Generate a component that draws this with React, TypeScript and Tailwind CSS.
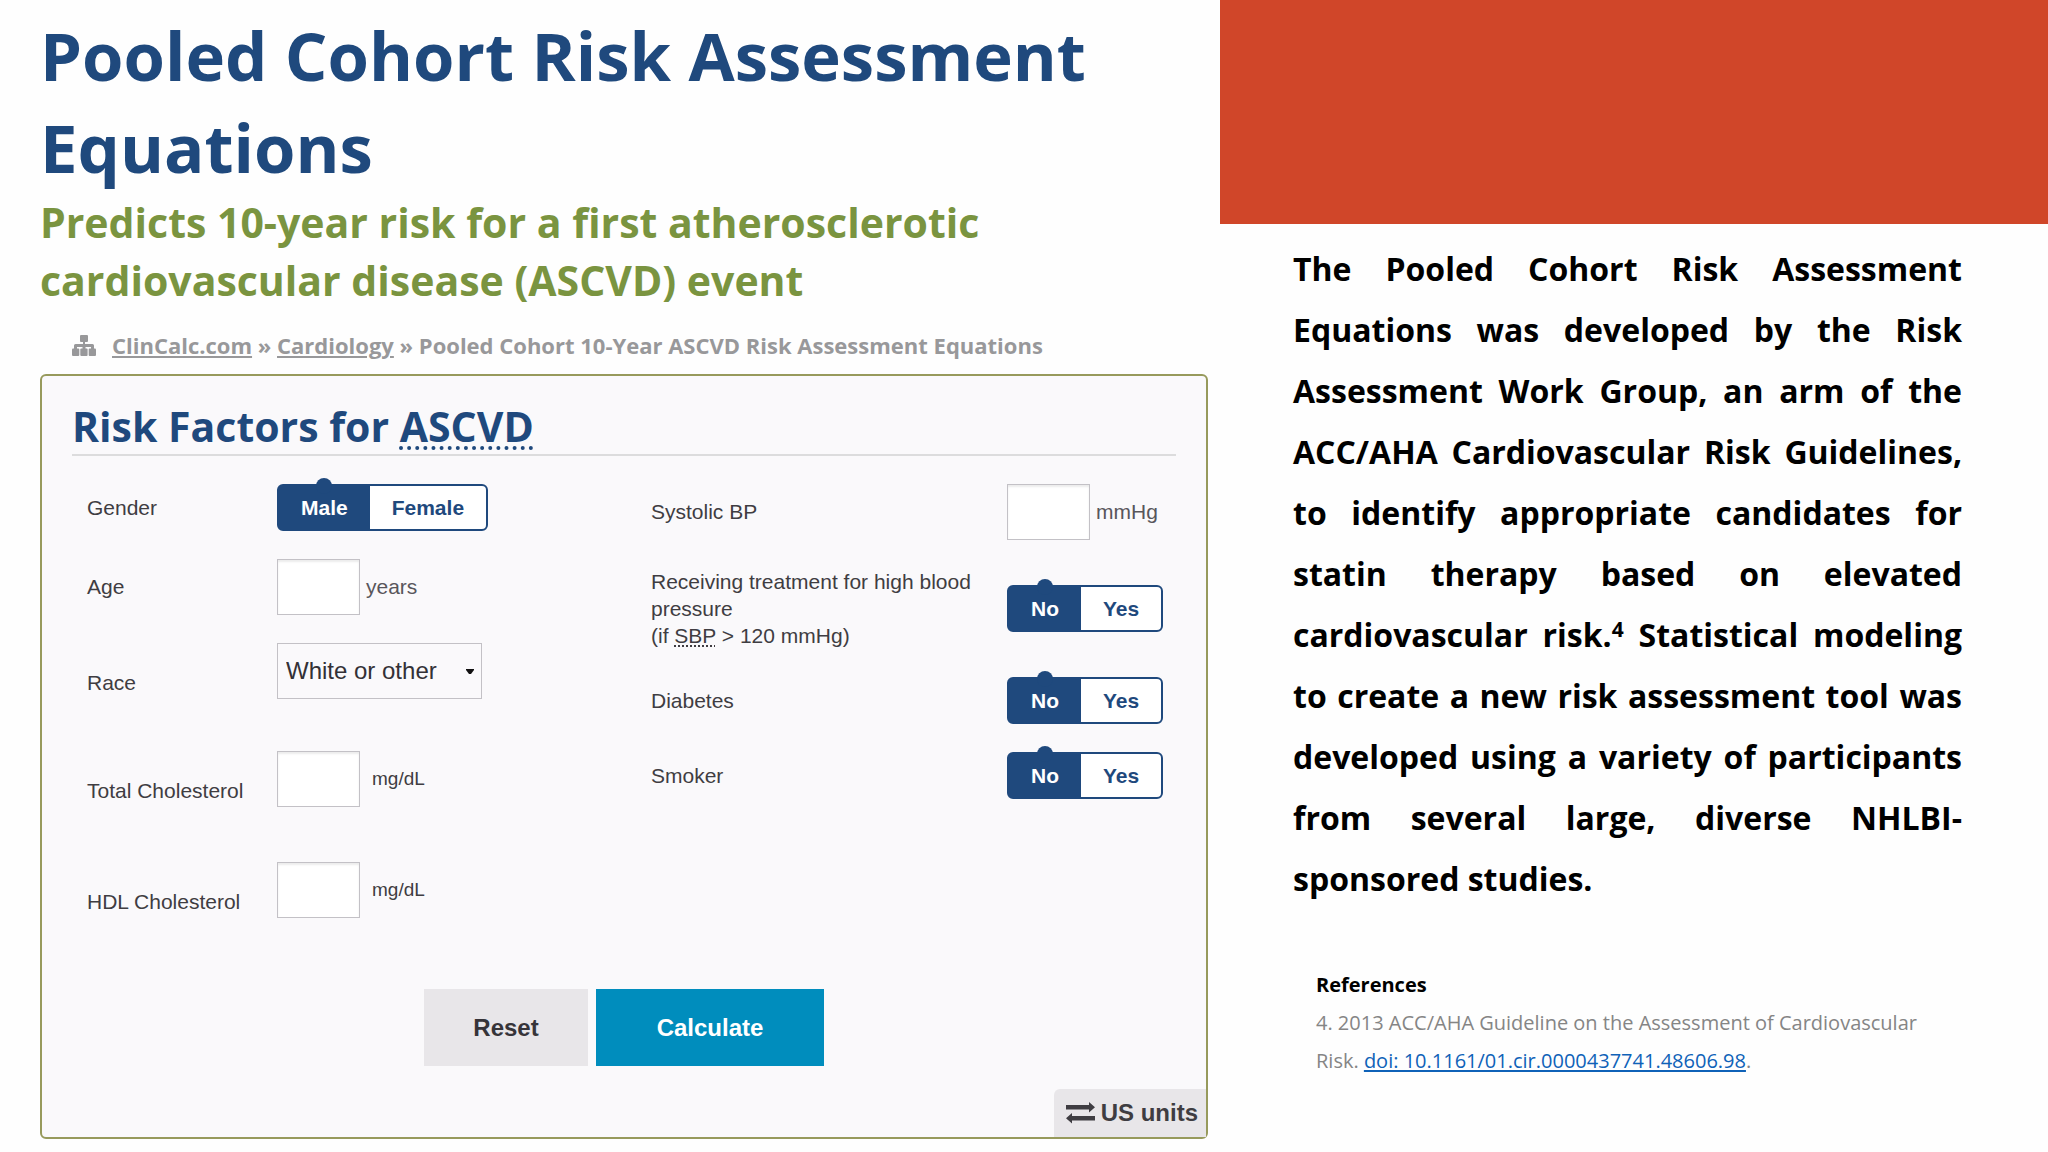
import { useState } from "react";
import type { ReactNode } from "react";

function SitemapIcon() {
  return (
    <svg viewBox="0 0 24 21" className="h-[21px] w-6 shrink-0" fill="currentColor" aria-hidden="true">
      <rect x="8" y="0" width="8" height="7" rx="1" />
      <path d="M11 6h2v3h7.500A1.500 1.500 0 0 1 22 10.500V15h-3v-3h-5.500v3h-3v-3H5v3H2v-4.500A1.500 1.500 0 0 1 3.500 9H11z" />
      <rect x="0" y="13.500" width="7.300" height="7.500" rx="1" />
      <rect x="8.300" y="13.500" width="7.300" height="7.500" rx="1" />
      <rect x="16.700" y="13.500" width="7.300" height="7.500" rx="1" />
    </svg>
  );
}

function ExchangeIcon() {
  return (
    <svg viewBox="0 0 29 22" className="h-[22px] w-[29px] shrink-0" fill="currentColor" aria-hidden="true">
      <path d="M0 3h23V0l6 5.200-6 5.300V7.500H0z" />
      <path d="M29 14H6v-3L0 16.300l6 5.200v-3h23z" />
    </svg>
  );
}

function Toggle({ name, label, options }: { name: string; label: string; options: string[] }) {
  const [value, setValue] = useState(options[0]);
  return (
    <div
      role="radiogroup"
      aria-label={label}
      className="flex h-[47px] w-fit rounded-md border-2 border-[#1f497d] bg-white text-[21px] font-bold"
    >
      {options.map((option) => (
        <label
          key={option}
          className={
            option === value
              ? "relative flex cursor-pointer items-center bg-[#1f497d] px-[22px] text-white"
              : "relative flex cursor-pointer items-center px-[22px] text-[#1f497d]"
          }
        >
          <input
            type="radio"
            name={name}
            value={option}
            checked={option === value}
            onChange={() => setValue(option)}
            className="sr-only"
          />
          {option === value && (
            <span className="absolute -top-2 left-1/2 size-4 -translate-x-1/2 rounded-full bg-[#1f497d]" />
          )}
          <span className="relative">{option}</span>
        </label>
      ))}
    </div>
  );
}

function NumberBox({ id }: { id: string }) {
  return (
    <input
      id={id}
      type="text"
      inputMode="numeric"
      className="h-14 w-[83px] border border-[#c3c1c6] bg-white px-2 text-2xl shadow-[inset_0_2px_2px_rgba(0,0,0,0.08)]"
    />
  );
}

function Row({ id, label, low, children }: { id?: string; label: string; low?: boolean; children: ReactNode }) {
  return (
    <div className="grid grid-cols-[190px_1fr] items-center">
      <label htmlFor={id} className={low ? "pt-6" : ""}>
        {label}
      </label>
      <div className="flex items-center">{children}</div>
    </div>
  );
}

const summary = [
  "The Pooled Cohort Risk Assessment",
  "Equations was developed by the Risk",
  "Assessment Work Group, an arm of the",
  "ACC/AHA Cardiovascular Risk Guidelines,",
  "to identify appropriate candidates for",
  "statin therapy based on elevated",
];
const summaryEnd = [
  "to create a new risk assessment tool was",
  "developed using a variety of participants",
  "from several large, diverse NHLBI-",
];

export default function App() {
  return (
    <div className="flex min-h-screen bg-[#fefefe] font-['Open_Sans',sans-serif]">
      <main className="w-[59.57%] pt-[9px] pr-3 pb-3 pl-10">
        <h1 className="text-[67px] leading-[92px] font-bold text-[#1f497d]">
          Pooled Cohort Risk Assessment
          <br />
          Equations
        </h1>
        <p className="text-[41px] leading-[58px] font-bold text-[#7a9440]">
          Predicts 10-year risk for a first atherosclerotic
          <br />
          cardiovascular disease (ASCVD) event
        </p>
        <nav
          aria-label="Breadcrumb"
          className="mt-5 flex items-center gap-4 pl-8 text-[22px] leading-8 font-bold text-[#98989a]"
        >
          <SitemapIcon />
          <span>
            <a href="#clincalc" className="underline decoration-2 underline-offset-2">
              ClinCalc.com
            </a>{" "}
            »{" "}
            <a href="#cardiology" className="underline decoration-2 underline-offset-2">
              Cardiology
            </a>{" "}
            » Pooled Cohort 10-Year ASCVD Risk Assessment Equations
          </span>
        </nav>

        <form
          onSubmit={(e) => e.preventDefault()}
          className="mt-[13px] flex flex-col rounded-md border-2 border-[#979a5c] bg-[#faf9fb] font-['Liberation_Sans',Arial,sans-serif] text-[21px] leading-7 text-[#3f3d42]"
        >
          <h2 className="mx-[30px] mt-[22px] border-b-2 border-[#dcdcdd] font-['Open_Sans',sans-serif] text-[41px] leading-14 font-bold text-[#1f497d]">
            Risk Factors for{" "}
            <abbr
              title="Atherosclerotic cardiovascular disease"
              className="underline decoration-dotted decoration-4 underline-offset-4"
            >
              ASCVD
            </abbr>
          </h2>

          <div className="mt-7 grid grid-cols-[564fr_511fr] pr-11 pl-[45px]">
            <div>
              <Row label="Gender">
                <Toggle name="gender" label="Gender" options={["Male", "Female"]} />
              </Row>
              <div className="mt-7">
                <Row id="age" label="Age">
                  <NumberBox id="age" />
                  <span className="ml-1.5 text-[#58565b]">years</span>
                </Row>
              </div>
              <div className="mt-7">
                <Row id="race" label="Race" low>
                  <div className="relative">
                    <select
                      id="race"
                      className="h-14 w-[205px] appearance-none border border-[#c3c1c6] bg-transparent pl-2 text-2xl text-[#333136]"
                    >
                      <option>White or other</option>
                      <option>African American</option>
                    </select>
                    <svg
                      viewBox="0 0 8 5"
                      className="pointer-events-none absolute top-[26px] right-2 h-[5px] w-2"
                      aria-hidden="true"
                    >
                      <path d="M0 0h8v1L5 5H3L0 1z" fill="#111" />
                    </svg>
                  </div>
                </Row>
              </div>
              <div className="mt-[52px]">
                <Row id="total" label="Total Cholesterol" low>
                  <NumberBox id="total" />
                  <span className="ml-3 text-[19px]">mg/dL</span>
                </Row>
              </div>
              <div className="mt-[55px]">
                <Row id="hdl" label="HDL Cholesterol" low>
                  <NumberBox id="hdl" />
                  <span className="ml-3 text-[19px]">mg/dL</span>
                </Row>
              </div>
            </div>

            <div>
              <div className="grid grid-cols-[1fr_155px] items-center">
                <label htmlFor="sbp">Systolic BP</label>
                <div className="flex items-center gap-1.5">
                  <NumberBox id="sbp" />
                  <span className="text-[#58565b]">mmHg</span>
                </div>
              </div>
              <div className="mt-7 grid grid-cols-[1fr_155px] items-center">
                <p className="leading-[27px]">
                  Receiving treatment for high blood pressure
                  <br />
                  (if{" "}
                  <abbr
                    title="Systolic blood pressure"
                    className="underline decoration-dotted decoration-2 underline-offset-2"
                  >
                    SBP
                  </abbr>{" "}
                  &gt; 120 mmHg)
                </p>
                <Toggle name="treatment" label="Receiving treatment for high blood pressure" options={["No", "Yes"]} />
              </div>
              <div className="mt-7 grid grid-cols-[1fr_155px] items-center">
                <p>Diabetes</p>
                <Toggle name="diabetes" label="Diabetes" options={["No", "Yes"]} />
              </div>
              <div className="mt-7 grid grid-cols-[1fr_155px] items-center">
                <p>Smoker</p>
                <Toggle name="smoker" label="Smoker" options={["No", "Yes"]} />
              </div>
            </div>
          </div>

          <div className="mt-[71px] flex justify-center gap-2 text-2xl font-bold">
            <button type="reset" className="h-[77px] w-[164px] bg-[#e8e6e9] text-[#363439]">
              Reset
            </button>
            <button type="submit" className="h-[77px] w-[228px] bg-[#008dbd] text-white">
              Calculate
            </button>
          </div>

          <button
            type="button"
            className="mt-[23px] flex h-12 items-center gap-1.5 self-end rounded-tl-md bg-[#e8e6e9] pr-2 pl-3 text-2xl font-bold text-[#3f3d42]"
          >
            <ExchangeIcon />
            US units
          </button>
        </form>
      </main>

      <aside className="flex-1 text-black">
        <div className="h-56 bg-[#d04629]" />
        <p className="mt-3.5 mr-[86px] ml-[73px] text-[32px] leading-[61px] font-bold">
          {summary.map((line) => (
            <span key={line} className="block [text-align-last:justify]">
              {line}{" "}
            </span>
          ))}
          <span className="block [text-align-last:justify]">
            cardiovascular risk.
            <sup className="top-0 align-[10px] text-[21px] leading-none">4</sup> Statistical modeling
          </span>
          {summaryEnd.map((line) => (
            <span key={line} className="block [text-align-last:justify]">
              {line}{" "}
            </span>
          ))}
          <span className="block">sponsored studies.</span>
        </p>
        <section className="mt-[57px] mr-[86px] ml-24 text-xl leading-[38px] text-[#858585]">
          <h3 className="font-bold text-black">References</h3>
          <p>
            4. 2013 ACC/AHA Guideline on the Assessment of Cardiovascular
            <br />
            Risk.{" "}
            <a
              href="#doi"
              className="text-[#0f62b8] underline decoration-2 underline-offset-2"
            >
              doi: 10.1161/01.cir.0000437741.48606.98
            </a>
            .
          </p>
        </section>
      </aside>
    </div>
  );
}
